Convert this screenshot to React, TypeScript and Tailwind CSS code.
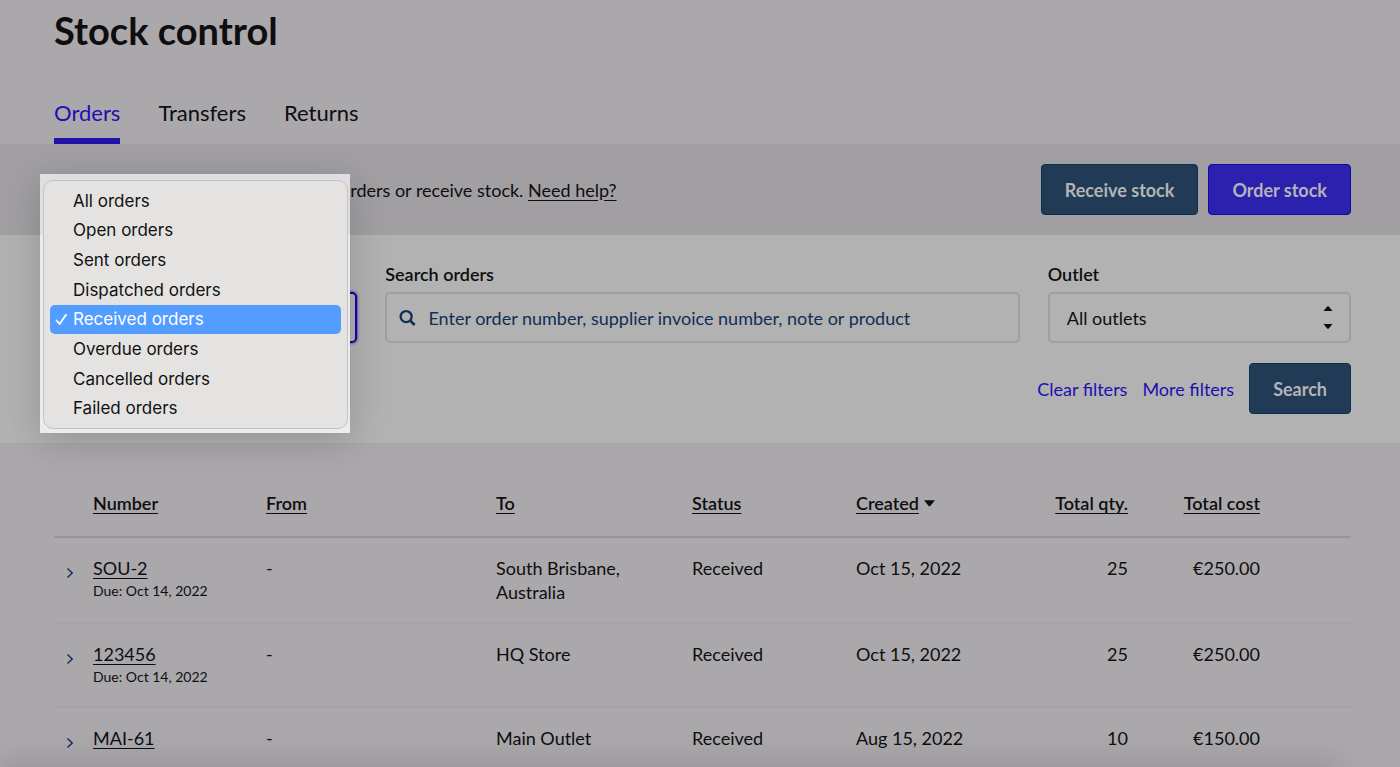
import React, { useState } from 'react'

interface IOrder {
  number: string,
  due?: string,
  from: string,
  to: string,
  status: string,
  created: string,
  qty: number,
  cost: string
}

const orders: IOrder[] = [
  { number: 'SOU-2', due: 'Oct 14, 2022', from: '-', to: 'South Brisbane, Australia', status: 'Received', created: 'Oct 15, 2022', qty: 25, cost: '€250.00' },
  { number: '123456', due: 'Oct 14, 2022', from: '-', to: 'HQ Store', status: 'Received', created: 'Oct 15, 2022', qty: 25, cost: '€250.00' },
  { number: 'MAI-61', from: '-', to: 'Main Outlet', status: 'Received', created: 'Aug 15, 2022', qty: 10, cost: '€150.00' },
]

const statusOptions = [
  'All orders',
  'Open orders',
  'Sent orders',
  'Dispatched orders',
  'Received orders',
  'Overdue orders',
  'Cancelled orders',
  'Failed orders',
]

function StatusMenu({ value, onChange }: { value: string, onChange: (v: string) => void }) {
  return (
    <div className="absolute -top-[118px] -left-[14px] z-10 w-[310px] bg-[linear-gradient(#dfdee1_61px,#ececec_61px)] pt-[6px] pr-[2px] pb-1 pl-[3px] shadow-[0_8px_36px_rgba(0,0,0,0.18)]">
      <ul
        role="listbox"
        aria-label="Order status"
        className="flex h-[249px] flex-col rounded-[10px] border border-[#c4c3c4] bg-[#e4e3e1] px-[6px] py-[5px] font-['Inter',sans-serif] text-[17px] text-[#111]"
      >
        {statusOptions.map((o) => {
          const selected = o === value
          return (
            <li key={o} role="option" aria-selected={selected} className="flex-1">
              <button
                type="button"
                onClick={() => onChange(o)}
                className={selected
                  ? 'flex h-full w-full items-center rounded-[5px] bg-[#529dff] pl-[5px] text-white'
                  : 'flex h-full w-full items-center pl-[5px]'}
              >
                <span className="w-[18px]">
                  {selected && (
                    <svg width="13" height="13" viewBox="0 0 13 13" fill="none" stroke="currentColor" strokeWidth="1.8" strokeLinecap="round" strokeLinejoin="round">
                      <path d="M1.5 7.5 4.6 11 11 1.8" />
                    </svg>
                  )}
                </span>
                {o}
              </button>
            </li>
          )
        })}
      </ul>
    </div>
  )
}

export default function StockControl() {
  const [status, setStatus] = useState('Received orders')

  return (
    <div className="relative h-screen overflow-hidden bg-[#aaa8ab] font-['Lato',sans-serif] text-[18px] leading-6 text-[#0e0e10]">
      <header className="pr-[49px] pl-[54px]">
        <h1 className="pt-[6px] text-[38px] leading-[48px] font-bold">Stock control</h1>
        <nav className="mt-[43px] flex gap-[38px] text-[22px] leading-8">
          <a href="#orders" className="border-b-6 border-[#2112a8] pb-[9px] text-[#1e0fb0]">Orders</a>
          <a href="#transfers">Transfers</a>
          <a href="#returns">Returns</a>
        </nav>
      </header>

      <section className="flex items-center justify-between bg-[#a19fa2] py-5 pr-[49px] pl-[340px]">
        <p>orders or receive stock. <a href="#help" className="underline underline-offset-3">Need help?</a></p>
        <div className="flex gap-[10px] font-bold text-[#b4b4b5]">
          <button type="button" className="h-[51px] rounded-[4px] border border-[#0c2f50] bg-[#213b57] px-[23px]">Receive stock</button>
          <button type="button" className="h-[51px] rounded-[4px] border border-[#1403b0] bg-[#2c20ae] px-[23px]">Order stock</button>
        </div>
      </section>

      <form className="bg-[#b2b2b2] pt-[27px] pr-[49px] pb-[29px] pl-[54px]" onSubmit={(e) => e.preventDefault()}>
        <div className="grid grid-cols-12 items-end gap-7">
          <div className="relative col-span-3">
            <select
              aria-label="Order status"
              value={status}
              onChange={(e) => setStatus(e.target.value)}
              className="block h-[51px] w-full appearance-none rounded-[5px] border-2 border-[#1403b0] px-4 shadow-[0_0_3px_#1403b0]"
            >
              {statusOptions.map((o) => <option key={o}>{o}</option>)}
            </select>
            <StatusMenu value={status} onChange={setStatus} />
          </div>
          <div className="col-span-6">
            <label htmlFor="search" className="block font-semibold">Search orders</label>
            <div className="mt-[6px] flex h-[51px] items-center gap-3 rounded-[5px] border-2 border-[#a09fa1] pl-3">
              <svg width="18" height="18" viewBox="0 0 18 18" fill="none" stroke="#0f2f55" strokeWidth="2.4">
                <circle cx="7.5" cy="7.5" r="5.8" />
                <path d="m11.8 11.8 4.6 4.6" strokeWidth="2.8" />
              </svg>
              <input
                id="search"
                type="text"
                placeholder="Enter order number, supplier invoice number, note or product"
                className="w-full bg-transparent outline-none placeholder:text-[#0f2f55]"
              />
            </div>
          </div>
          <div className="col-span-3">
            <label htmlFor="outlet" className="block font-semibold">Outlet</label>
            <div className="relative mt-[6px]">
              <select id="outlet" className="block h-[51px] w-full appearance-none rounded-[5px] border-2 border-[#a09fa1] px-[17px]">
                <option>All outlets</option>
              </select>
              <svg className="pointer-events-none absolute top-[13px] right-[18px]" width="10" height="26" viewBox="0 0 10 26" fill="#0e0e10">
                <path d="M.5 6 4.2 1.6Q5 .8 5.8 1.6L9.500 6Z" />
                <path d="M.5 19H9.500L5.800 23.400Q5 24.200 4.200 23.400Z" />
              </svg>
            </div>
          </div>
        </div>
        <div className="mt-5 flex items-center justify-end gap-[15px] text-[#1e0fb0]">
          <a href="#clear">Clear filters</a>
          <a href="#more">More filters</a>
          <button type="submit" className="h-[51px] rounded-[4px] border border-[#0c2f50] bg-[#213b57] px-[23px] font-bold text-[#b4b4b5]">Search</button>
        </div>
      </form>

      <main className="pt-7 pr-[49px] pl-[54px]">
        <table className="w-full table-fixed border-separate border-spacing-0 text-left">
          <colgroup>
            <col className="w-[39px]" />
            <col className="w-[173px]" />
            <col className="w-[230px]" />
            <col className="w-[196px]" />
            <col className="w-[164px]" />
            <col className="w-[164px]" />
            <col className="w-[108px]" />
            <col className="w-[132px]" />
            <col className="w-[91px]" />
          </colgroup>
          <thead className="[&_a]:underline [&_a]:underline-offset-3 [&_th]:border-b-2 [&_th]:border-[#969497] [&_th]:pt-5 [&_th]:pb-[21px] [&_th]:font-semibold">
            <tr>
              <th></th>
              <th><a href="#number">Number</a></th>
              <th><a href="#from">From</a></th>
              <th><a href="#to">To</a></th>
              <th><a href="#status">Status</a></th>
              <th>
                <div className="flex items-center gap-[5px]">
                  <a href="#created">Created</a>
                  <svg width="11" height="7" viewBox="0 0 10 6" fill="#0e0e10">
                    <path d="M0 0H10L5.700 5.200Q5 6 4.300 5.200Z" />
                  </svg>
                </div>
              </th>
              <th className="text-right"><a href="#qty">Total qty.</a></th>
              <th className="text-right"><a href="#cost">Total cost</a></th>
              <th></th>
            </tr>
          </thead>
          <tbody className="align-top [&_td]:border-b-2 [&_td]:border-[#a4a2a5] [&_td]:py-[18px]">
            {orders.map((i) => (
              <tr key={i.number}>
                <td>
                  <button type="button" aria-label="Expand" className="flex h-[34px] items-center pl-3">
                    <svg width="8" height="12" viewBox="0 0 8 12" fill="none" stroke="#12305c" strokeWidth="1.5">
                      <path d="m1.500 1.500 4.700 4.500-4.700 4.500" />
                    </svg>
                  </button>
                </td>
                <td>
                  <a href="#order" className="underline underline-offset-3">{i.number}</a>
                  {i.due && <div className="text-[14px] leading-[22px]">Due: {i.due}</div>}
                </td>
                <td>{i.from}</td>
                <td className="pr-12">{i.to}</td>
                <td>{i.status}</td>
                <td>{i.created}</td>
                <td className="text-right">{i.qty}</td>
                <td className="text-right">{i.cost}</td>
                <td></td>
              </tr>
            ))}
          </tbody>
        </table>
      </main>

      <div className="pointer-events-none absolute right-[60px] -bottom-4 left-0 h-4 shadow-[0_0_32px_rgba(0,0,0,0.22)]" />
    </div>
  )
}
